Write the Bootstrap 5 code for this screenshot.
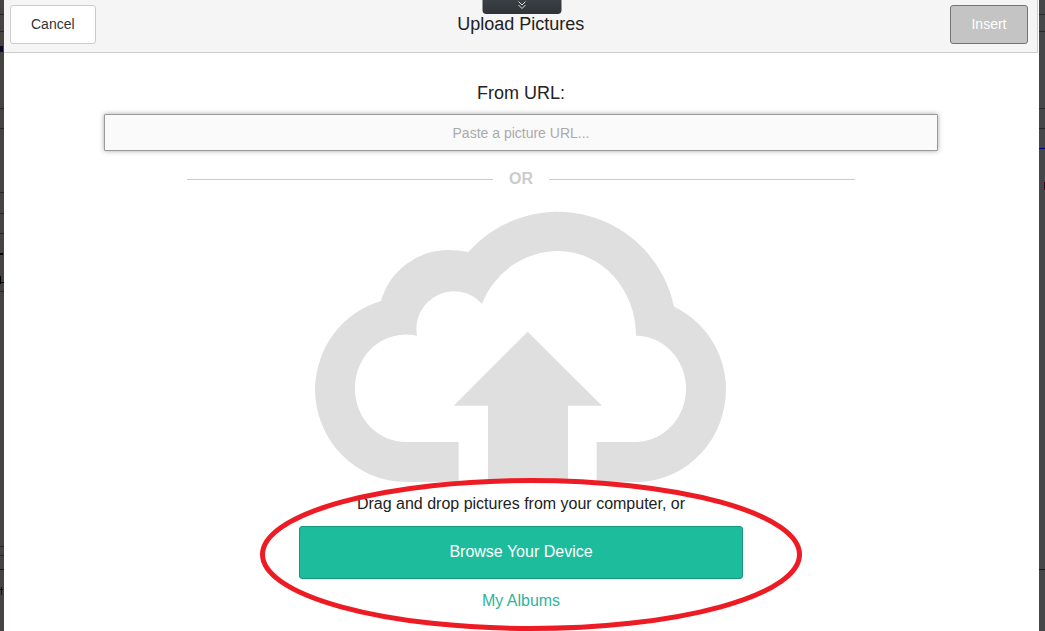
<!DOCTYPE html>
<html lang="en">
<head>
<meta charset="utf-8">
<meta name="viewport" content="width=device-width, initial-scale=1">
<title>Upload Pictures</title>
<link href="https://cdn.jsdelivr.net/npm/bootstrap@5.3.0/dist/css/bootstrap.min.css" rel="stylesheet">
<style>
  body { font-family: "Liberation Sans", Arial, sans-serif; font-size: 16px; line-height: 20px; color: #222; background: #454241; }
  .page-behind {
    padding: 0 6px 0 4px;
    background:
      linear-gradient(#282625, #282625) 0 14px / 4px 1px no-repeat,
      linear-gradient(#282625, #282625) 0 31px / 4px 1px no-repeat,
      linear-gradient(#0a0a28, #0a0a28) 0 46px / 3px 6px no-repeat,
      linear-gradient(#282625, #282625) 0 108px / 4px 1px no-repeat,
      linear-gradient(#282625, #282625) 0 128px / 4px 1px no-repeat,
      linear-gradient(#282625, #282625) 0 192px / 4px 1px no-repeat,
      linear-gradient(#282625, #282625) 0 213px / 4px 1px no-repeat,
      linear-gradient(#282625, #282625) 0 233px / 4px 1px no-repeat,
      linear-gradient(#000, #000) 0 253px / 3px 2px no-repeat,
      linear-gradient(#000, #000) 0 276px / 1px 8px no-repeat,
      linear-gradient(#000, #000) 0 282px / 4px 1px no-repeat,
      linear-gradient(#282625, #282625) 0 291px / 4px 1px no-repeat,
      linear-gradient(#282625, #282625) 0 546px / 4px 1px no-repeat,
      linear-gradient(#282625, #282625) 0 555px / 4px 1px no-repeat,
      linear-gradient(#181616, #181616) 0 569px / 100% 1px no-repeat,
      linear-gradient(#111, #111) 1px 587px / 1px 8px no-repeat,
      linear-gradient(#111, #111) 0 589px / 3px 1px no-repeat,
      linear-gradient(#282828, #282828) 100% 14px / 6px 1px no-repeat,
      linear-gradient(#282828, #282828) 100% 31px / 6px 1px no-repeat,
      linear-gradient(#282828, #282828) 100% 108px / 6px 1px no-repeat,
      linear-gradient(#282828, #282828) 100% 128px / 6px 1px no-repeat,
      linear-gradient(#00007a, #00007a) 100% 148px / 6px 1px no-repeat,
      linear-gradient(#40001a, #40001a) 100% 182px / 1px 8px no-repeat,
      linear-gradient(90deg, #454241 50%, #464748 50%);
  }
  .dialog-pane { background: #fff; padding-right: 1px; }
  .dialog-bar { background: #f5f5f5; border: solid #ccc; border-width: 0 1px 1px 0; padding: 5px 9px 8px 6px; }
  .bar-title { font-size: 18px; line-height: 22px; font-weight: 400; padding: 0 4px 2px 0; }
  .btn-bar { font-size: 14px; line-height: 19px; padding: 9px 20px; border-radius: 3px; min-width: 78px; }
  .btn-cancel, .btn-cancel:hover { background: #fff; border-color: #ccc; color: #333; }
  .btn-insert:disabled { background: #c4c4c4; border-color: #747474; color: #fff; opacity: 1; }
  .pull-tab { width: 79px; height: 14px; border: 0; border-radius: 0 0 4px 4px; background: linear-gradient(#3b4045, #2f3337); }
  .dialog-content { padding: 29px 100px 20px; }
  .url-label { font-size: 18px; line-height: 22px; margin-bottom: 10px; }
  .url-box, .url-box:focus { height: 37px; font-size: 14px; background: #fafafa; border: 1px solid #999; border-radius: 1px; box-shadow: 0 0 5px rgba(0,0,0,.35); }
  .url-box::placeholder { color: #aaa; }
  .or-row { width: 80%; margin-top: 18px; color: #ccc; gap: 16px; }
  .or-line { height: 1px; background: #ccc; }
  .cloud { width: 412px; max-width: 100%; margin-top: 22px; }
  .drop-zone { width: 444px; max-width: 100%; margin-top: 11px; }
  .btn-browse, .btn-browse:hover { background: #1dbc9c; border: 1px solid #16987e; border-radius: 3px; color: #fff; font-size: 16px; line-height: 21px; padding: 14px 15px 16px; margin: 12px 0; }
  .albums-link { color: #2fb59a; }
  .ring { left: -39px; top: -16px; width: 542px; height: 153px; pointer-events: none; }
</style>
</head>
<body>
<div class="page-behind min-vh-100 d-flex flex-column">
  <main class="dialog-pane flex-grow-1 position-relative">
    <header class="dialog-bar d-flex justify-content-between align-items-center">
      <button type="button" class="btn btn-bar btn-cancel">Cancel</button>
      <h1 class="bar-title m-0">Upload Pictures</h1>
      <button type="button" class="btn btn-bar btn-insert" disabled>Insert</button>
    </header>
    <button type="button" class="pull-tab position-absolute top-0 start-50 translate-middle-x p-0 d-flex justify-content-center" aria-label="Expand">
      <svg width="9" height="10" viewBox="0 0 9 10" fill="none" stroke="#ddd"><path d="M1 1.500L4.500 5L8 1.500M1 5L4.500 8.500L8 5"/></svg>
    </button>
    <form class="dialog-content d-flex flex-column align-items-center">
      <label for="url" class="url-label">From URL:</label>
      <input id="url" type="text" class="form-control url-box text-center" placeholder="Paste a picture URL...">
      <div class="or-row d-flex align-items-center">
        <span class="or-line flex-grow-1"></span><strong>OR</strong><span class="or-line flex-grow-1"></span>
      </div>
      <svg class="cloud" viewBox="45 33 1236 816" fill="#dfdfdf" aria-hidden="true">
        <path d="M476 846H318A273 279 0 0 1 45 567A273 279 0 0 1 243 303A209 209 0 0 1 445 150Q478 150 505 156A357 357 0 0 1 1122 320A273 275 0 0 1 1278 567A270 279 0 0 1 1020 846H890V726H1005A153 159 0 0 0 1158 567A150 160 0 0 0 1008 407A233 254 0 0 0 775 153A247 254 0 0 0 546 311A113 113 0 0 0 351 407A153 160 0 0 0 165 567A153 159 0 0 0 318 726H476Z"/>
        <path d="M683 395L906 617H804V846H564V617H461Z"/>
      </svg>
      <div class="drop-zone position-relative d-flex flex-column text-center">
        <span>Drag and drop pictures from your computer, or</span>
        <button type="button" class="btn btn-browse">Browse Your Device</button>
        <a href="#" class="albums-link text-decoration-none align-self-center">My Albums</a>
        <svg class="ring position-absolute" viewBox="0 0 542 153" aria-hidden="true"><ellipse cx="271" cy="76.500" rx="268.500" ry="74" fill="none" stroke="#ed1c24" stroke-width="5"/></svg>
      </div>
    </form>
  </main>
</div>
<script src="https://cdn.jsdelivr.net/npm/bootstrap@5.3.0/dist/js/bootstrap.bundle.min.js"></script>
</body>
</html>
